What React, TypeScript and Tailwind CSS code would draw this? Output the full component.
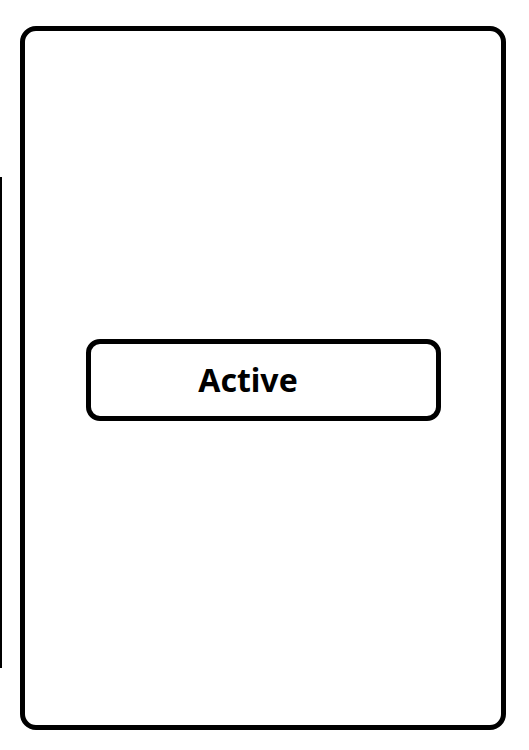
export default function App() {
  return (
    <div className="flex items-start w-[529px] h-[750px] bg-white overflow-hidden" style={{ fontFamily: '"Noto Sans", "Open Sans", sans-serif' }}>
      <div className="w-[2px] h-[491px] mt-[177px] bg-black shrink-0" />
      <div className="ml-[18px] mt-[26px] w-[486px] h-[704px] border-[5px] border-black rounded-[16px] flex items-center justify-center pt-[4px] shrink-0">
        <div className="w-[355px] h-[82px] border-[5px] border-black rounded-[14px] flex items-center justify-center pr-[30px]">
          <span className="text-[32px] font-bold text-black leading-none">Active</span>
        </div>
      </div>
    </div>
  );
}
